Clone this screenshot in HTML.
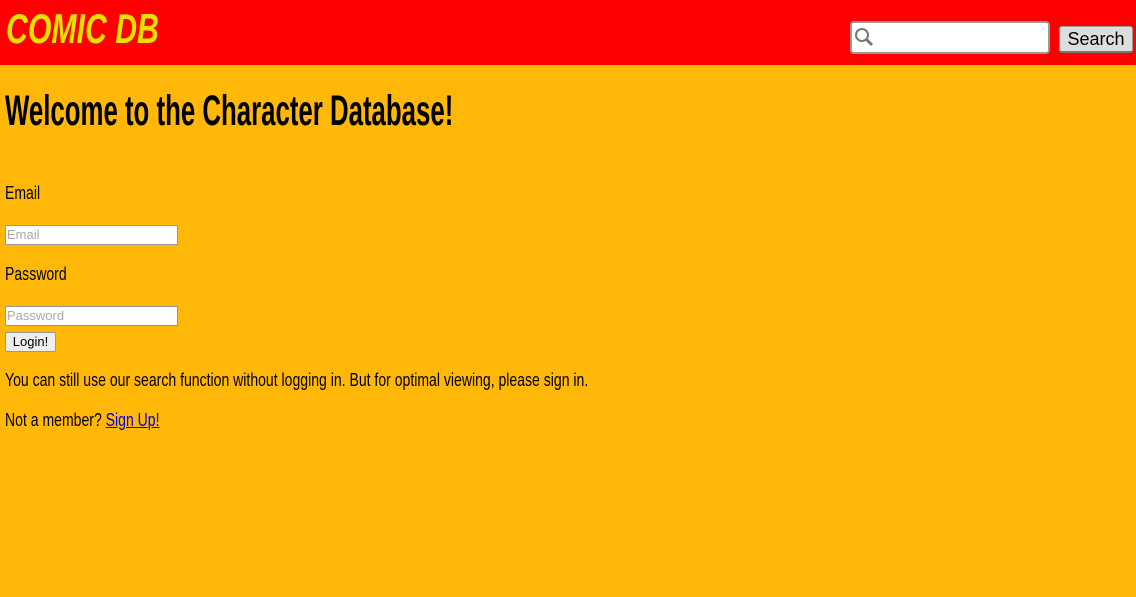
<!DOCTYPE html>
<html><head><style>
body{margin:0;background:#ffb808;font-family:"Liberation Sans",sans-serif;width:1136px;height:597px;overflow:hidden;position:relative}
.hdr{position:absolute;left:0;top:0;width:1136px;height:65px;background:#ff0000}
.logo{position:absolute;left:6px;top:5px;font-weight:bold;font-style:italic;font-size:42px;color:#e8e000;white-space:nowrap;transform-origin:0 0;transform:scaleX(0.72)}
.sbox{position:absolute;left:850px;top:21px;width:200px;height:33px;background:#fff;border:2px solid #999;border-radius:4px;box-sizing:border-box}
.sbtn{position:absolute;left:1059px;top:26px;width:74px;height:27px;background:#ddd;border:1px solid #999;border-bottom:2px solid #777;border-radius:3px;box-sizing:border-box;font-size:18px;text-align:center;line-height:24px;color:#000}
h1{position:absolute;left:5px;top:87px;margin:0;font-size:43px;font-weight:bold;white-space:nowrap;transform-origin:0 0;transform:scaleX(0.6)}
.t{position:absolute;left:5px;font-size:18px;white-space:nowrap;color:#000;transform-origin:0 0;transform:scaleX(0.78)}
.in{position:absolute;left:5px;width:173px;height:20px;background:#fff;border:1px solid #999;box-sizing:border-box;font-size:13px;color:#aaa;line-height:18px;padding-left:1px}
.lb{position:absolute;left:5px;top:332px;width:51px;height:20px;background:#eee;border:1px solid #999;box-sizing:border-box;border-radius:2px;font-size:13px;text-align:center;line-height:18px}
a{color:#00e}
</style></head><body>
<div class="hdr">
<div class="logo">COMIC DB</div>
<div class="sbox"><svg width="24" height="24" style="position:absolute;left:1px;top:3px"><circle cx="9" cy="9" r="6" fill="none" stroke="#777" stroke-width="2"/><line x1="13" y1="13" x2="19" y2="19" stroke="#777" stroke-width="3"/></svg></div>
<div class="sbtn">Search</div>
</div>
<h1>Welcome to the Character Database!</h1>
<div class="t" style="top:183px">Email</div>
<div class="in" style="top:225px">Email</div>
<div class="t" style="top:264px">Password</div>
<div class="in" style="top:306px">Password</div>
<div class="lb">Login!</div>
<div class="t" style="top:370px">You can still use our search function without logging in. But for optimal viewing, please sign in.</div>
<div class="t" style="top:410px">Not a member? <a href="#">Sign Up!</a></div>
</body></html>
